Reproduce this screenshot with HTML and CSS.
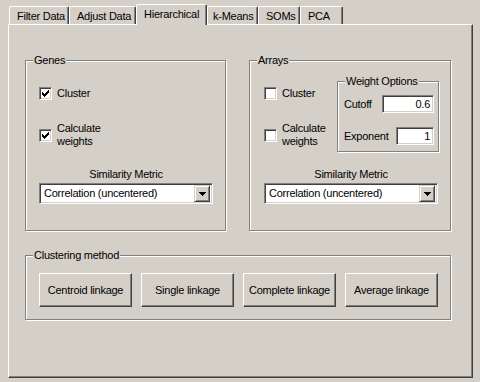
FILE: index.html
```html
<!DOCTYPE html>
<html lang="en">
<head>
  <meta charset="UTF-8" />
  <title>Hierarchical</title>
  <link rel="stylesheet" href="styles.css">
</head>
<body>
  <div class="window">
    <div class="tabs">
      <div class="tab tab-filter">Filter Data</div>
      <div class="tab tab-adjust">Adjust Data</div>
      <div class="tab tab-hier active">Hierarchical</div>
      <div class="tab tab-kmeans">k-Means</div>
      <div class="tab tab-soms">SOMs</div>
      <div class="tab tab-pca">PCA</div>
    </div>

    <div class="panel">
      <div class="top-row">
        <!-- Genes -->
        <div class="group genes">
          <span class="group-title">Genes</span>
          <div class="opts">
            <div class="checks">
              <label class="check">
                <span class="box"><svg width="7" height="7" viewBox="0 0 7 7" shape-rendering="crispEdges"><path d="M6 0h1v3H6zM5 1h1v3H5zM4 2h1v3H4zM3 3h1v3H3zM2 4h1v3H2zM1 3h1v3H1zM0 2h1v3H0z" fill="#000"/></svg></span>
                <span>Cluster</span>
              </label>
              <label class="check">
                <span class="box"><svg width="7" height="7" viewBox="0 0 7 7" shape-rendering="crispEdges"><path d="M6 0h1v3H6zM5 1h1v3H5zM4 2h1v3H4zM3 3h1v3H3zM2 4h1v3H2zM1 3h1v3H1zM0 2h1v3H0z" fill="#000"/></svg></span>
                <span>Calculate<br>weights</span>
              </label>
            </div>
          </div>
          <div class="metric">
            <div class="metric-label">Similarity Metric</div>
            <div class="combo">
              <span class="combo-text">Correlation (uncentered)</span>
              <span class="combo-btn"><svg width="7" height="4" viewBox="0 0 7 4" shape-rendering="crispEdges"><path d="M0 0h7v1H0zM1 1h5v1H1zM2 2h3v1H2zM3 3h1v1H3z" fill="#000"/></svg></span>
            </div>
          </div>
        </div>

        <!-- Arrays -->
        <div class="group arrays">
          <span class="group-title">Arrays</span>
          <div class="opts">
            <div class="checks">
              <label class="check">
                <span class="box"></span>
                <span>Cluster</span>
              </label>
              <label class="check">
                <span class="box"></span>
                <span>Calculate<br>weights</span>
              </label>
            </div>
            <div class="group weights">
              <span class="group-title">Weight Options</span>
              <div class="field">
                <span>Cutoff</span>
                <span class="input input-cutoff">0.6</span>
              </div>
              <div class="field">
                <span>Exponent</span>
                <span class="input input-exp">1</span>
              </div>
            </div>
          </div>
          <div class="metric">
            <div class="metric-label">Similarity Metric</div>
            <div class="combo">
              <span class="combo-text">Correlation (uncentered)</span>
              <span class="combo-btn"><svg width="7" height="4" viewBox="0 0 7 4" shape-rendering="crispEdges"><path d="M0 0h7v1H0zM1 1h5v1H1zM2 2h3v1H2zM3 3h1v1H3z" fill="#000"/></svg></span>
            </div>
          </div>
        </div>
      </div>

      <!-- Clustering method -->
      <div class="group methods">
        <span class="group-title">Clustering method</span>
        <div class="buttons">
          <button class="btn">Centroid linkage</button>
          <button class="btn">Single linkage</button>
          <button class="btn">Complete linkage</button>
          <button class="btn">Average linkage</button>
        </div>
      </div>
    </div>
  </div>
</body>
</html>
```

FILE: styles.css
```css
* {
  box-sizing: border-box;
  margin: 0;
  padding: 0;
}
body {
  font-family: 'Liberation Sans', Arial, sans-serif;
  font-size: 11px;
  line-height: 13px;
  letter-spacing: -0.25px;
  background: #d4d0c8;
  color: #000;
  width: 480px;
  height: 382px;
  overflow: hidden;
}
.window {
  padding-left: 8px;
}

/* tabs */
.tabs {
  display: flex;
  align-items: flex-end;
  height: 24px;
  padding-left: 1px;
}
.tab {
  height: 18px;
  padding: 3px 0 0 7px;
  border-top: 1px solid #fff;
  border-left: 1px solid #fff;
  border-right: 1px solid #404040;
  border-top-left-radius: 2px;
  border-top-right-radius: 2px;
  box-shadow: inset -1px 0 0 #808080;
  white-space: nowrap;
}
.tab.active {
  position: relative;
  z-index: 1;
  height: 21px;
  margin-bottom: -1px;
  background: #d4d0c8;
}
.tab-filter { width: 60px; }
.tab-adjust { width: 67px; }
.tab-hier { width: 71px; }
.tab-kmeans { width: 51px; padding-left: 5px; }
.tab-soms { width: 42px; }
.tab-pca { width: 43px; }

/* panel */
.panel {
  width: 465px;
  height: 354px;
  padding: 35px 0 0 16px;
  border-top: 1px solid #fff;
  border-left: 1px solid #fff;
  border-right: 1px solid #404040;
  border-bottom: 1px solid #404040;
  box-shadow: inset -1px -1px 0 #808080;
}
.top-row {
  display: flex;
  gap: 23px;
}

/* etched group box */
.group {
  position: relative;
  border: 1px solid #808080;
  box-shadow: 1px 1px 0 #fff, inset 1px 1px 0 #fff;
}
.group-title {
  position: absolute;
  top: -7px;
  left: 7px;
  padding: 0 1px;
  background: #d4d0c8;
  white-space: nowrap;
}
.genes {
  width: 201px;
  height: 171px;
  padding-left: 13px;
}
.arrays {
  width: 202px;
  height: 171px;
  padding-left: 14px;
}
.opts {
  display: flex;
  height: 107px;
}
.checks {
  display: flex;
  flex-direction: column;
  gap: 22px;
  padding-top: 26px;
}
.arrays .checks {
  width: 73px;
}
.check {
  display: flex;
  align-items: center;
  gap: 5px;
}
.box {
  display: flex;
  align-items: center;
  justify-content: center;
  width: 13px;
  height: 13px;
  flex-shrink: 0;
  background: #fff;
  border: 1px solid;
  border-color: #808080 #fff #fff #808080;
  box-shadow: inset 1px 1px 0 #404040, inset -1px -1px 0 #d4d0c8;
}

/* weight options */
.weights {
  width: 102px;
  height: 71px;
  margin-top: 20px;
  padding: 13px 4px 0 6px;
  display: flex;
  flex-direction: column;
  gap: 14px;
}
.field {
  display: flex;
  align-items: center;
  justify-content: space-between;
}
.input {
  height: 18px;
  padding: 2px 3px 0 0;
  text-align: right;
  background: #fff;
  border: 1px solid;
  border-color: #808080 #fff #fff #808080;
  box-shadow: inset 1px 1px 0 #404040, inset -1px -1px 0 #d4d0c8;
}
.input-cutoff { width: 52px; }
.input-exp { width: 38px; }

/* similarity metric */
.metric {
  width: 174px;
}
.metric-label {
  text-align: center;
  margin-bottom: 2px;
}
.combo {
  display: flex;
  align-items: center;
  justify-content: space-between;
  height: 21px;
  padding: 2px 2px 2px 4px;
  background: #fff;
  border: 1px solid;
  border-color: #808080 #fff #fff #808080;
  box-shadow: inset 1px 1px 0 #404040, inset -1px -1px 0 #d4d0c8;
}
.combo-btn {
  display: flex;
  align-items: center;
  justify-content: center;
  width: 16px;
  height: 17px;
  background: #d4d0c8;
  border: 1px solid;
  border-color: #d4d0c8 #404040 #404040 #d4d0c8;
  box-shadow: inset 1px 1px 0 #fff, inset -1px -1px 0 #808080;
}

/* clustering method */
.methods {
  width: 426px;
  height: 65px;
  margin-top: 24px;
  padding: 17px 0 0 13px;
}
.buttons {
  display: flex;
  gap: 9px;
}
.btn {
  width: 93px;
  height: 34px;
  font: inherit;
  letter-spacing: inherit;
  color: #000;
  background: #d4d0c8;
  border: 1px solid;
  border-color: #fff #404040 #404040 #fff;
  box-shadow: inset -1px -1px 0 #808080;
}
```
